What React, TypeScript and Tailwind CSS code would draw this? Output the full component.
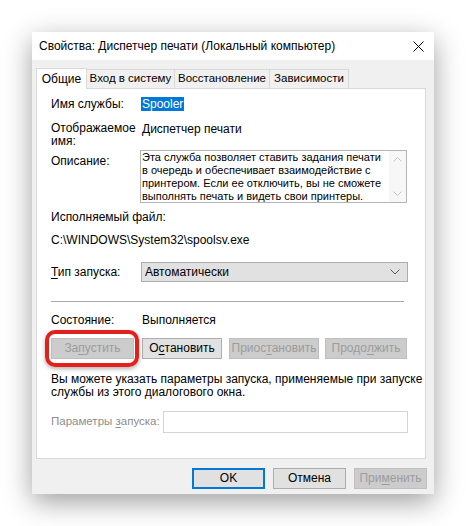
import React from 'react';

const font = { fontFamily: '"Liberation Sans", Arial, sans-serif' };

function Btn({
  children,
  w,
  disabled,
  primary,
  className = '',
}: {
  children: React.ReactNode;
  w: string;
  disabled?: boolean;
  primary?: boolean;
  className?: string;
}) {
  const base = 'h-[21px] flex items-center justify-center text-[12px] leading-[15px] shrink-0 whitespace-nowrap';
  let look = 'bg-[#e1e1e1] border border-[#adadad] text-black';
  if (disabled) look = 'bg-[#cccccc] border border-[#bfbfbf] text-[#9c9c9c]';
  if (primary) look = 'bg-[#e1e1e1] border-2 border-[#0078d7] text-black';
  return <div className={`${base} ${look} ${w} ${className}`}>{children}</div>;
}

function Tab({ label, w, active }: { label: string; w: string; active?: boolean }) {
  if (active) {
    return (
      <div className={`${w} h-[21px] -mb-px bg-white border border-b-0 border-[#d9d9d9] relative z-10 flex items-center justify-center text-[12px]`}>
        {label}
      </div>
    );
  }
  return (
    <div className={`${w} h-[19px] -ml-px bg-[#f0f0f0] border border-b-0 border-[#d9d9d9] flex items-center justify-center text-[11.5px] whitespace-nowrap`}>
      {label}
    </div>
  );
}

export default function App() {
  return (
    <div className="w-[466px] h-[526px] bg-white overflow-hidden pt-[32px] pl-[32px]" style={font}>
      <div className="w-[402px] h-[462px] bg-[#f0f0f0] shadow-[0_8px_26px_rgba(0,0,0,0.38)] flex flex-col text-black">
        {/* Title bar */}
        <div className="h-[28px] bg-white flex items-center justify-between pl-[7px] pr-[10px]">
          <span className="text-[12px] leading-[15px]">Свойства: Диспетчер печати (Локальный компьютер)</span>
          <svg width="11" height="11" viewBox="0 0 11 11">
            <path d="M0.5 0.5 L10.5 10.5 M10.5 0.5 L0.5 10.5" stroke="#000" strokeWidth="1" fill="none" />
          </svg>
        </div>

        {/* Tabs */}
        <div className="flex items-end ml-[4px] mt-[7px] h-[21px]">
          <Tab label="Общие" w="w-[51px]" active />
          <Tab label="Вход в систему" w="w-[89px]" />
          <Tab label="Восстановление" w="w-[96px]" />
          <Tab label="Зависимости" w="w-[80px]" />
        </div>

        {/* Panel */}
        <div className="ml-[4px] w-[390px] h-[371px] bg-white border border-[#d9d9d9] pl-[14px] flex flex-col text-[12px] leading-[15px]">
          <div className="flex mt-[8px] h-[15px]">
            <span className="w-[90px]">Имя службы:</span>
            <span className="bg-[#0078d7] text-white px-[1px] h-[14px] leading-[14px]">Spooler</span>
          </div>

          <div className="flex mt-[10px]">
            <span className="w-[91px] leading-[13px]">
              Отображаемое
              <br />
              имя:
            </span>
            <span>Диспетчер печати</span>
          </div>

          <div className="flex mt-[2px]">
            <span className="w-[89px] mt-[4px]">Описание:</span>
            <div className="w-[267px] h-[53px] border border-[#b4b4b4] flex">
              <div className="flex-1 pl-[1px] text-[11px] leading-[13px] whitespace-nowrap">
                Эта служба позволяет ставить задания печати
                <br />
                в очередь и обеспечивает взаимодействие с
                <br />
                принтером. Если ее отключить, вы не сможете
                <br />
                выполнять печать и видеть свои принтеры.
              </div>
              <div className="w-[17px] flex flex-col items-center justify-between py-[6px] bg-[#f7f7f7]">
                <svg width="9" height="5" viewBox="0 0 9 5">
                  <path d="M0.5 4.5 L4.5 0.5 L8.5 4.5" stroke="#c2c2c2" strokeWidth="1" fill="none" />
                </svg>
                <svg width="9" height="5" viewBox="0 0 9 5">
                  <path d="M0.5 0.5 L4.5 4.5 L8.5 0.5" stroke="#c2c2c2" strokeWidth="1" fill="none" />
                </svg>
              </div>
            </div>
          </div>

          <div className="mt-[7px]">Исполняемый файл:</div>
          <div className="mt-[8px]">C:\WINDOWS\System32\spoolsv.exe</div>

          <div className="flex items-center mt-[14px]">
            <span className="w-[90px]">
              <span className="underline underline-offset-2">Т</span>ип запуска:
            </span>
            <div className="w-[267px] h-[20px] bg-[#e1e1e1] border border-[#adadad] flex items-center justify-between pl-[3px] pr-[7px]">
              <span>Автоматически</span>
              <svg width="10" height="6" viewBox="0 0 10 6">
                <path d="M0.5 0.5 L5 5 L9.5 0.5" stroke="#5a5a5a" strokeWidth="1" fill="none" />
              </svg>
            </div>
          </div>

          <div className="mt-[19px] w-[353px] h-px bg-[#a9a9a9]" />

          <div className="flex mt-[11px]">
            <span className="w-[91px]">Состояние:</span>
            <span>Выполняется</span>
          </div>

          <div className="flex mt-[10px]">
            <div className="relative">
              <Btn w="w-[83px]" disabled>
                За<span className="underline underline-offset-2">п</span>устить
              </Btn>
              <span className="absolute left-[-6px] top-[-8px] w-[94px] h-[37px] rounded-[10px] border-[4px] border-[#e4201d] shadow-[0_2px_4px_rgba(0,0,0,0.3)]" />
            </div>
            <Btn w="w-[80px]" className="ml-[8px]">
              О<span className="underline underline-offset-2">с</span>тановить
            </Btn>
            <Btn w="w-[90px]" className="ml-[7px]" disabled>
              Приос<span className="underline underline-offset-2">т</span>ановить
            </Btn>
            <Btn w="w-[82px]" className="ml-[6px]" disabled>
              Продо<span className="underline underline-offset-2">л</span>жить
            </Btn>
          </div>

          <div className="mt-[14px] leading-[13.3px] whitespace-nowrap">
            Вы можете указать параметры запуска, применяемые при запуске
            <br />
            службы из этого диалогового окна.
          </div>

          <div className="flex items-center mt-[11px]">
            <span className="w-[112px] text-[11.5px] text-[#8d8d8d] whitespace-nowrap">
              Параметры <span className="underline underline-offset-2">з</span>апуска:
            </span>
            <div className="w-[245px] h-[22px] border border-[#d4d4d4] bg-white" />
          </div>
        </div>

        {/* Bottom buttons */}
        <div className="flex justify-end mt-[9px] pr-[7px] gap-[8px]">
          <Btn w="w-[73px]" primary>
            OK
          </Btn>
          <Btn w="w-[73px]">Отмена</Btn>
          <Btn w="w-[73px]" disabled>
            При<span className="underline underline-offset-2">м</span>енить
          </Btn>
        </div>
      </div>
    </div>
  );
}
